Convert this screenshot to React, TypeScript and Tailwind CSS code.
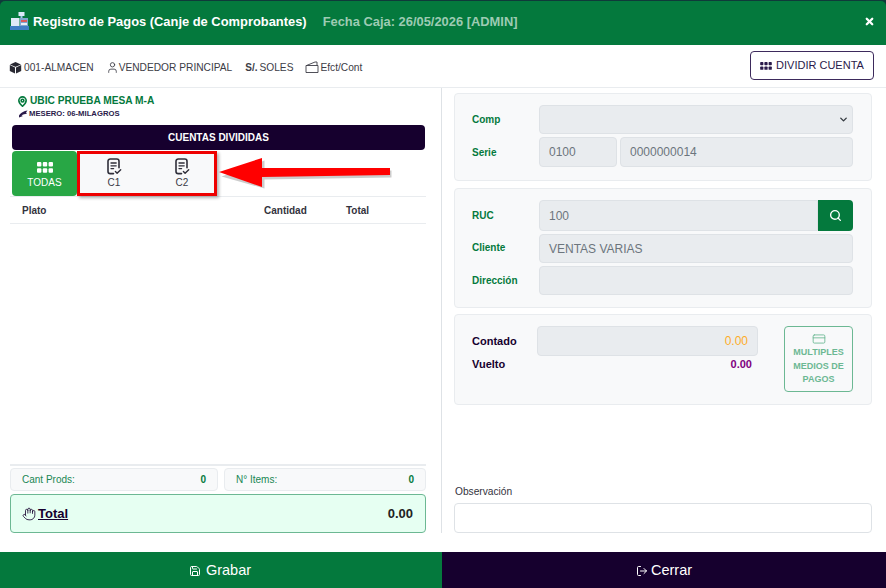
import { ChevronDown, CreditCard, LogOut, MapPin, Save, Search, User, X, Hand } from "lucide-react";

const GridIcon = ({ width, height }: { width: number; height: number }) => {
	return (
		<svg width={width} height={height} viewBox="0 0 16 11" fill="currentColor">
			<rect x="0" y="0" width="4.4" height="4.6" rx="1" />
			<rect x="5.8" y="0" width="4.4" height="4.6" rx="1" />
			<rect x="11.6" y="0" width="4.4" height="4.6" rx="1" />
			<rect x="0" y="6.2" width="4.4" height="4.6" rx="1" />
			<rect x="5.8" y="6.2" width="4.4" height="4.6" rx="1" />
			<rect x="11.6" y="6.2" width="4.4" height="4.6" rx="1" />
		</svg>
	);
};

const ReceiptCheck = () => {
	return (
		<svg width="15" height="17" viewBox="0 0 15 17" fill="none" stroke="#2f2f3a" strokeWidth="1.6" strokeLinecap="round" strokeLinejoin="round">
			<path d="M6.5 15.6H3.2a2.2 2.2 0 0 1-2.2-2.2V3.2A2.2 2.2 0 0 1 3.2 1h6.6A2.2 2.2 0 0 1 12 3.2v6.6" />
			<path d="M4 5h5.2M4 7.8h5.2M4 10.6h2.6" strokeWidth="1.3" />
			<path d="M8.4 13.6l1.7 1.7 3.6-3.6" strokeWidth="1.4" />
		</svg>
	);
};

const TabItem = ({ label }: { label: string }) => {
	return (
		<div className="flex w-[68px] flex-col items-center pt-[7px] text-[#3a3a46]">
			<ReceiptCheck />
			<span className="mt-[2px] text-[10px] leading-[12px]">{label}</span>
		</div>
	);
};

const Field = ({ className, children }: { className?: string; children?: React.ReactNode }) => {
	return (
		<div className={`flex items-center rounded-[4px] border border-[#dee2e6] bg-[#e9ecef] px-[9px] text-[12px] text-[#6c757d] ${className}`}>
			{children}
		</div>
	);
};

const Label = ({ children }: { children: React.ReactNode }) => {
	return <span className="w-[84px] shrink-0 pl-[17px] text-[10px] font-bold text-[#04793d]">{children}</span>;
};

const App = () => {
	return (
		<div className="relative flex h-[588px] w-[886px] flex-col overflow-hidden bg-[#0f3a3a] font-['Liberation_Sans',sans-serif]">
			<header className="mt-px flex h-[44px] shrink-0 items-center rounded-t-[5px] bg-[#04793d] pb-[3px] pl-[10px] pr-[11px]">
				<svg width="19" height="19" viewBox="0 0 19 19" className="mr-[4px]">
					<rect x="8.5" y="0" width="6" height="4" fill="#dbeafa" />
					<rect x="10.5" y="4" width="2" height="2" fill="#9cc4e8" />
					<rect x="1" y="6" width="8.5" height="8" fill="#dfeaf7" />
					<rect x="10" y="6" width="8" height="8" fill="#7fa6cf" />
					<rect x="11" y="8" width="6" height="2" fill="#d95b5b" />
					<rect x="11" y="11" width="6" height="2" fill="#e8eef5" />
					<rect x="0" y="14" width="19" height="4" fill="#3f7fc4" />
				</svg>
				<span className="text-[12.9px] font-bold text-white">Registro de Pagos (Canje de Comprobantes)</span>
				<span className="ml-[16px] text-[12.9px] font-bold text-[#9dcbb3]">Fecha Caja: 26/05/2026 [ADMIN]</span>
				<X size={11} strokeWidth={5} className="ml-auto text-white" />
			</header>

			<div className="flex h-[43px] shrink-0 items-center border-b border-[#e9ecef] bg-white pl-[9px] pr-[12px] text-[10.2px] text-[#3c3c46]">
				<div className="flex items-center pt-[3px]">
					<svg width="13" height="13" viewBox="0 0 13 13" fill="#2a2a33">
						<path d="M6.2 5.8 L1 3.4 L6.5 1 L12 3.4 L6.8 5.8 Z" />
						<path d="M0.8 4 L6 6.4 V12.4 L0.8 10 Z" />
						<path d="M12.2 4 L7 6.4 V12.4 L12.2 10 Z" />
					</svg>
					<span className="ml-[2px]">001-ALMACEN</span>
					<User size={13} strokeWidth={1.6} className="ml-[12px]" />
					<span>VENDEDOR PRINCIPAL</span>
					<span className="ml-[13px] text-[10px] font-bold">S/.</span>
					<span className="ml-[2px]">SOLES</span>
					<svg width="14" height="13" viewBox="0 0 14 13" fill="none" stroke="#3c3c46" strokeWidth="0.9" className="ml-[12px]">
						<path d="M1 4.5 h12 v7 h-12 z" />
						<path d="M1.5 4.5 L10 1 L12 1 V4.5" />
					</svg>
					<span className="ml-[1px]">Efct/Cont</span>
				</div>
				<button className="mb-[1px] ml-auto flex h-[29px] w-[124px] items-center justify-center gap-[4px] rounded-[4px] border border-[#3d2a5c] text-[11px] text-[#2a1a4a]">
					<GridIcon width={12} height={8} />
					DIVIDIR CUENTA
				</button>
			</div>

			<div className="flex min-h-0 flex-1 bg-white">
				<section className="mb-[19px] flex w-[442px] shrink-0 flex-col border-r border-[#dee2e6] pl-[10px] pr-[15px]">
					<div className="flex items-center pl-[7px] pt-[7px] text-[10.2px] font-bold leading-[12px] text-[#04793d]">
						<MapPin size={11} strokeWidth={3.5} />
						<span className="ml-[2px]">UBIC PRUEBA MESA M-A</span>
					</div>
					<div className="flex items-center pl-[8px] pt-[1px] text-[7.7px] font-bold leading-[11px] text-[#2a1a4a]">
						<svg width="10" height="8" viewBox="0 0 10 8" fill="#2a1a4a">
							<path d="M1 5.5 C2 3 5 2 7 1 L9.5 0.5 L8 2.5 L9 3.5 C7 4 5 4.5 3.5 5.5 L5 6 L1 7.5 Z" />
						</svg>
						<span className="ml-[1px]">MESERO: 06-MILAGROS</span>
					</div>
					<div className="ml-[2px] mr-[1px] mt-[6px] flex h-[25px] shrink-0 items-center justify-center rounded-[4px] bg-[#16002e] text-[10px] font-bold text-white">
						CUENTAS DIVIDIDAS
					</div>
					<div className="flex h-[46px] shrink-0 pl-[2px] pt-px">
						<div className="flex w-[65px] flex-col items-center rounded-[4px] bg-[#28a745] pt-[11px] text-[10px] text-white">
							<GridIcon width={16} height={11} />
							<span className="mt-[4px] leading-[12px]">TODAS</span>
						</div>
						<div className="flex w-[140px] justify-center bg-[#f8f9fa] pl-[2px]">
							<TabItem label="C1" />
							<TabItem label="C2" />
						</div>
					</div>
					<div className="flex h-[28px] shrink-0 items-center border-y border-[#e9ecef] pl-[12px] text-[10px] font-bold text-[#33333d]">
						<span className="w-[242px]">Plato</span>
						<span className="w-[82px]">Cantidad</span>
						<span>Total</span>
					</div>
					<div className="flex-1 border-b-2 border-[#e9ecef]" />
					<div className="mt-[2px] flex justify-between text-[10px] text-[#198754]">
						<div className="flex h-[23px] w-[208px] items-center justify-between rounded-[4px] border border-[#e9ecef] bg-[#f8f9fa] pl-[11px] pr-[11px]">
							<span>Cant Prods:</span>
							<b className="text-[#04793d]">0</b>
						</div>
						<div className="flex h-[23px] w-[202px] items-center justify-between rounded-[4px] border border-[#e9ecef] bg-[#f8f9fa] pl-[11px] pr-[11px]">
							<span>N° Items:</span>
							<b className="text-[#04793d]">0</b>
						</div>
					</div>
					<div className="mt-[3px] flex h-[39px] shrink-0 items-center justify-between rounded-[4px] border border-[#6cb893] bg-[#e6fff2] pl-[11px] pr-[12px] font-bold text-[#16002e]">
						<div className="flex items-center gap-[2px] text-[13px]">
							<Hand size={14} strokeWidth={1.4} />
							<span className="underline">Total</span>
						</div>
						<span className="text-[13px] text-[#222]">0.00</span>
					</div>
				</section>

				<section className="flex flex-1 flex-col pl-[12px] pr-[14px] pt-[5px] pb-[19px]">
					<div className="flex h-[88px] shrink-0 flex-col gap-[3px] rounded-[4px] border border-[#e9ecef] bg-[#f8f9fa] pr-[18px] pt-[11px]">
						<div className="flex items-center">
							<Label>Comp</Label>
							<Field className="h-[29px] flex-1 justify-end !px-[3px]">
								<ChevronDown size={11} strokeWidth={3} className="text-[#343a40]" />
							</Field>
						</div>
						<div className="flex items-center">
							<Label>Serie</Label>
							<Field className="h-[30px] w-[78px]">0100</Field>
							<Field className="ml-[3px] h-[30px] flex-1">0000000014</Field>
						</div>
					</div>

					<div className="mt-[7px] flex h-[120px] shrink-0 flex-col gap-[3px] rounded-[4px] border border-[#e9ecef] bg-[#f8f9fa] pr-[18px] pt-[11px]">
						<div className="flex items-center">
							<Label>RUC</Label>
							<Field className="h-[31px] flex-1 rounded-r-none">100</Field>
							<div className="flex h-[31px] w-[35px] items-center justify-center rounded-r-[4px] bg-[#04793d] text-white">
								<Search size={13} strokeWidth={2.5} />
							</div>
						</div>
						<div className="flex items-center">
							<Label>
								<span className="relative -top-px">Cliente</span>
							</Label>
							<Field className="h-[29px] flex-1">VENTAS VARIAS</Field>
						</div>
						<div className="flex items-center">
							<Label>Dirección</Label>
							<Field className="h-[29px] flex-1" />
						</div>
					</div>

					<div className="mt-[6px] flex h-[91px] shrink-0 rounded-[4px] border border-[#e9ecef] bg-[#f8f9fa] pr-[18px] pt-[11px]">
						<div className="w-[303px]">
							<div className="flex items-center">
								<span className="w-[82px] shrink-0 pl-[17px] text-[11px] font-bold text-[#16002e]">Contado</span>
								<Field className="h-[30px] flex-1 justify-end text-[#fdad2a]">0.00</Field>
							</div>
							<div className="flex items-center justify-between pr-[6px]">
								<span className="pl-[17px] text-[11px] font-bold text-[#16002e]">Vuelto</span>
								<span className="text-[11px] font-bold text-[#800080]">0.00</span>
							</div>
						</div>
						<div className="ml-auto flex h-[66px] w-[69px] flex-col items-center rounded-[4px] border border-[#6cb893] pt-[5px] text-center text-[9px] font-bold leading-[13.5px] text-[#6cb893]">
							<CreditCard size={14} strokeWidth={1.5} />
							<span>MULTIPLES MEDIOS DE PAGOS</span>
						</div>
					</div>

					<div className="mt-auto pl-[1px] text-[10.2px] leading-[14px] text-[#33333d]">Observación</div>
					<div className="mt-[4px] h-[30px] shrink-0 rounded-[4px] border border-[#dee2e6] bg-white" />
				</section>
			</div>

			<footer className="flex h-[36px] shrink-0 text-[14.5px] text-white">
				<div className="flex w-[442px] items-center justify-center gap-[5px] bg-[#04793d] pr-[2px] pt-[2px]">
					<Save size={12} />
					Grabar
				</div>
				<div className="flex flex-1 items-center justify-center gap-[3px] bg-[#16002e] pt-[2px]">
					<LogOut size={12} />
					Cerrar
				</div>
			</footer>

			{/* marca roja sobre la captura */}
			<div className="absolute left-[77px] top-[151px] h-[45px] w-[140px] border-[3px] border-[#ee0000] shadow-[2px_2px_3px_rgba(0,0,0,0.3)]" />
			<svg width="180" height="36" viewBox="0 0 180 36" className="absolute left-[218px] top-[156px]">
				<polygon points="2,19 45,3 45,13 172,13 172,20 45,22 45,31" fill="#000" opacity="0.2" transform="translate(1.5,1.5)" />
				<polygon points="1,16 44,2 44,12 172,12 172,19 44,21 44,31" fill="#ff0000" />
			</svg>
		</div>
	);
};

export default App;
